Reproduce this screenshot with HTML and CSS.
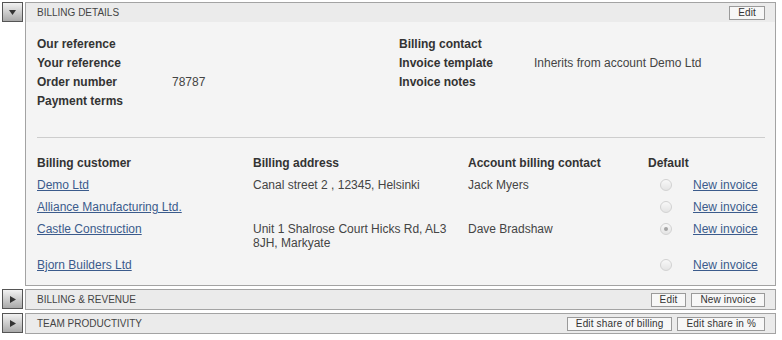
FILE: index.html
```html
<!DOCTYPE html>
<html>
<head>
  <title>Billing</title>
  <link rel="stylesheet" href="styles.css">
</head>
<body>
  <div class="section">
    <button class="toggle" type="button">
      <svg width="7" height="5" viewBox="0 0 7 5"><polygon points="0,0 7,0 3.5,5" fill="#333"/></svg>
    </button>
    <div class="panel">
      <div class="panel-head">
        <span class="panel-title">Billing details</span>
        <div class="actions">
          <button class="btn" type="button">Edit</button>
        </div>
      </div>
      <div class="panel-body">
        <div class="info">
          <div class="fields">
            <span class="label">Our reference</span><span></span>
            <span class="label">Your reference</span><span></span>
            <span class="label">Order number</span><span class="value">78787</span>
            <span class="label">Payment terms</span><span></span>
          </div>
          <div class="fields">
            <span class="label">Billing contact</span><span></span>
            <span class="label">Invoice template</span><span class="value">Inherits from account Demo Ltd</span>
            <span class="label">Invoice notes</span><span></span>
          </div>
        </div>

        <hr class="divider">

        <table class="customers">
          <colgroup>
            <col class="c1">
            <col class="c2">
            <col class="c3">
            <col>
          </colgroup>
          <thead>
            <tr>
              <th>Billing customer</th>
              <th>Billing address</th>
              <th>Account billing contact</th>
              <th>Default</th>
            </tr>
          </thead>
          <tbody>
            <tr>
              <td><a href="#">Demo Ltd</a></td>
              <td>Canal street 2 , 12345, Helsinki</td>
              <td>Jack Myers</td>
              <td class="default"><span class="radio"></span><a href="#">New invoice</a></td>
            </tr>
            <tr>
              <td><a href="#">Alliance Manufacturing Ltd.</a></td>
              <td></td>
              <td></td>
              <td class="default"><span class="radio"></span><a href="#">New invoice</a></td>
            </tr>
            <tr>
              <td><a href="#">Castle Construction</a></td>
              <td>Unit 1 Shalrose Court Hicks Rd, AL3 8JH, Markyate</td>
              <td>Dave Bradshaw</td>
              <td class="default"><span class="radio checked"></span><a href="#">New invoice</a></td>
            </tr>
            <tr>
              <td><a href="#">Bjorn Builders Ltd</a></td>
              <td></td>
              <td></td>
              <td class="default"><span class="radio"></span><a href="#">New invoice</a></td>
            </tr>
          </tbody>
        </table>
      </div>
    </div>
  </div>

  <div class="section">
    <button class="toggle" type="button">
      <svg width="6" height="7" viewBox="0 0 6 7"><polygon points="0,0 6,3.5 0,7" fill="#333"/></svg>
    </button>
    <div class="panel">
      <div class="panel-head">
        <span class="panel-title">Billing &amp; revenue</span>
        <div class="actions">
          <button class="btn" type="button">Edit</button>
          <button class="btn" type="button">New invoice</button>
        </div>
      </div>
    </div>
  </div>

  <div class="section">
    <button class="toggle" type="button">
      <svg width="6" height="7" viewBox="0 0 6 7"><polygon points="0,0 6,3.5 0,7" fill="#333"/></svg>
    </button>
    <div class="panel">
      <div class="panel-head">
        <span class="panel-title">Team productivity</span>
        <div class="actions">
          <button class="btn" type="button">Edit share of billing</button>
          <button class="btn" type="button">Edit share in %</button>
        </div>
      </div>
    </div>
  </div>
</body>
</html>
```

FILE: styles.css
```css
body {
  margin: 2px 6px 0 2px;
  font-family: "Liberation Sans", Arial, sans-serif;
  font-size: 12px;
  color: #444;
  background: #fff;
}

.section {
  display: flex;
  align-items: flex-start;
  gap: 2px;
  margin-bottom: 3px;
}

.toggle {
  flex: none;
  width: 21px;
  height: 20px;
  padding: 0;
  border: 1px solid #555;
  background: linear-gradient(#f2f2f2, #a9a9a9);
  display: flex;
  align-items: center;
  justify-content: center;
}

.panel {
  flex: 1;
  border: 1px solid #a3a3a3;
  background: #f4f4f4;
}

.panel-head {
  height: 19px;
  display: flex;
  align-items: center;
  justify-content: space-between;
  padding: 0 10px 0 11px;
  background: #ebebeb;
}

.panel-title {
  font-size: 10px;
  text-transform: uppercase;
  color: #444;
}

.actions {
  display: flex;
  gap: 5px;
}

.btn {
  height: 14px;
  padding: 0 8px;
  border: 1px solid #9a9a9a;
  background: #f7f7f7;
  font-family: "Liberation Sans", Arial, sans-serif;
  font-size: 10px;
  line-height: 12px;
  letter-spacing: 0.15px;
  color: #333;
}

.panel-body {
  padding: 13px 10px 9px 11px;
}

.info {
  display: grid;
  grid-template-columns: 362px 1fr;
}

.fields {
  display: grid;
  grid-template-columns: 135px 1fr;
  grid-auto-rows: 19px;
  line-height: 19px;
  align-content: start;
}

.label {
  font-weight: bold;
  color: #333;
}

.divider {
  border: 0;
  border-top: 1px solid #cdcdcd;
  margin: 26px 0 14px;
}

.customers {
  width: 100%;
  table-layout: fixed;
  border-collapse: collapse;
}

.customers .c1 { width: 216px; }
.customers .c2 { width: 215px; }
.customers .c3 { width: 180px; }

.customers th,
.customers td {
  padding: 4px 0;
  line-height: 14px;
  text-align: left;
  vertical-align: top;
}

.customers th {
  font-weight: bold;
  color: #333;
}

.customers td:nth-child(2) {
  padding-right: 16px;
}

.customers a {
  color: #3b5b8c;
}

.default {
  display: flex;
  align-items: center;
  gap: 21px;
  padding-left: 12px !important;
}

.radio {
  width: 10px;
  height: 10px;
  border: 1px solid #d2d2d2;
  border-radius: 50%;
  background: linear-gradient(#f8f8f8, #e4e4e4);
  display: flex;
  align-items: center;
  justify-content: center;
}

.radio.checked::after {
  content: "";
  width: 4px;
  height: 4px;
  border-radius: 50%;
  background: #a5a5a5;
}
```
